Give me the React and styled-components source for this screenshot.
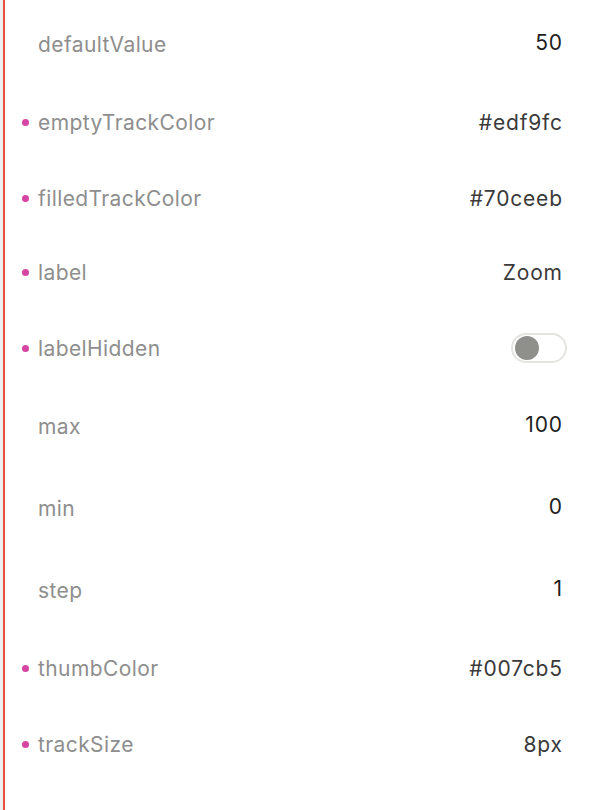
import React from "react";
import styled, { createGlobalStyle } from "styled-components";

const Global = createGlobalStyle`
  html, body { margin: 0; padding: 0; background: #ffffff; }
  body { font-family: Inter, "Noto Sans", sans-serif; }
`;

const Page = styled.div`
  display: flex;
  width: 596px;
  height: 810px;
  overflow: hidden;
  background: #fff;
`;

const Gutter = styled.div`
  width: 3px;
  background: #efefef;
  flex: none;
`;

const Rule = styled.div`
  width: 2px;
  background: #e8513a;
  flex: none;
`;

const List = styled.div`
  flex: 1;
  display: flex;
  flex-direction: column;
  padding-top: 5px;
  padding-right: 34px;
`;

const Row = styled.div`
  display: flex;
  align-items: center;
  height: ${(p) => p.$h}px;
  padding-left: 17px;
`;

const Dot = styled.span`
  width: 7px;
  height: 7px;
  border-radius: 50%;
  background: ${(p) => (p.$on ? "#d844a4" : "transparent")};
  flex: none;
  margin-right: 9px;
`;

const Label = styled.span`
  flex: 1;
  font-size: 21px;
  color: #8e8e8e;
  letter-spacing: 0.4px;
`;

const Value = styled.span`
  font-size: 21px;
  letter-spacing: 0.8px;
  margin-right: -0.8px;
  color: ${(p) => (p.$num ? "#1e1e1e" : "#3a3a3a")};
  position: relative;
  top: ${(p) => (p.$num ? -2 : 0)}px;
`;

const Toggle = styled.span`
  display: flex;
  align-items: center;
  box-sizing: border-box;
  width: 56px;
  height: 30px;
  border: 2px solid #e4e4e0;
  border-radius: 15px;
  padding-left: 2px;
  margin-right: -5px;
`;

const Knob = styled.span`
  width: 24px;
  height: 24px;
  border-radius: 50%;
  background: #8f8f8b;
`;

const rows = [
  { name: "defaultValue", value: "50", h: 78, num: true },
  { name: "emptyTrackColor", value: "#edf9fc", h: 78, dot: true },
  { name: "filledTrackColor", value: "#70ceeb", h: 74, dot: true },
  { name: "label", value: "Zoom", h: 74, dot: true },
  { name: "labelHidden", toggle: true, h: 78, dot: true },
  { name: "max", value: "100", h: 78, num: true },
  { name: "min", value: "0", h: 86, num: true },
  { name: "step", value: "1", h: 78, num: true },
  { name: "thumbColor", value: "#007cb5", h: 78, dot: true },
  { name: "trackSize", value: "8px", h: 74, dot: true },
];

export default function App() {
  return (
    <>
      <Global />
      <Page>
        <Gutter />
        <Rule />
        <List>
          {rows.map((r) => (
            <Row key={r.name} $h={r.h}>
              <Dot $on={r.dot} />
              <Label>{r.name}</Label>
              {r.toggle ? (
                <Toggle>
                  <Knob />
                </Toggle>
              ) : (
                <Value $num={r.num}>{r.value}</Value>
              )}
            </Row>
          ))}
        </List>
      </Page>
    </>
  );
}
